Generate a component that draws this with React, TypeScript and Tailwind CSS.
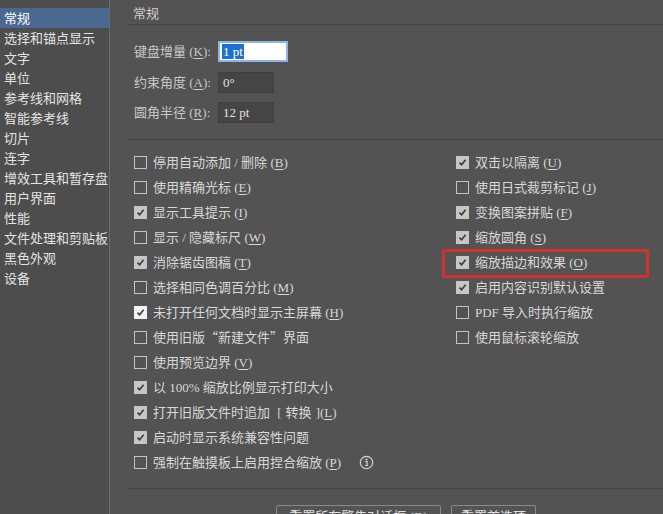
import { ReactNode } from "react";

const font = { fontFamily: '"Liberation Serif", "Noto Sans CJK SC", serif' };
const cjk = { fontFamily: '"Noto Sans CJK SC", sans-serif' };

const navItems = [
  "常规",
  "选择和锚点显示",
  "文字",
  "单位",
  "参考线和网格",
  "智能参考线",
  "切片",
  "连字",
  "增效工具和暂存盘",
  "用户界面",
  "性能",
  "文件处理和剪贴板",
  "黑色外观",
  "设备",
];

type Opt = { label: ReactNode; id: string; key?: string; tight?: boolean; checked: boolean; bright?: boolean; info?: boolean };

const leftOpts: Opt[] = [
  { id: "b", label: "停用自动添加 / 删除", key: "B", checked: false },
  { id: "e", label: "使用精确光标", key: "E", checked: false },
  { id: "i", label: "显示工具提示", key: "I", checked: true },
  { id: "w", label: "显示 / 隐藏标尺", key: "W", checked: false },
  { id: "t", label: "消除锯齿图稿", key: "T", checked: true },
  { id: "m", label: "选择相同色调百分比", key: "M", checked: false },
  { id: "h", label: "未打开任何文档时显示主屏幕", key: "H", checked: true, bright: true },
  {
    id: "new",
    label: (
      <>
        使用旧版<span style={cjk}>“</span>新建文件<span style={cjk}>”</span>界面
      </>
    ),
    checked: false,
  },
  { id: "v", label: "使用预览边界", key: "V", checked: false },
  { id: "print", label: "以 100% 缩放比例显示打印大小", checked: true },
  {
    id: "l",
    label: (
      <>
        打开旧版文件时追加 <span className="ml-[4px]">[</span>
        <span className="mx-[4px]">转换</span>]
      </>
    ),
    key: "L",
    checked: true,
    tight: true,
  },
  { id: "compat", label: "启动时显示系统兼容性问题", checked: true },
  { id: "p", label: "强制在触摸板上启用捏合缩放", key: "P", checked: false, info: true },
];

const rightOpts: Opt[] = [
  { id: "u", label: "双击以隔离", key: "U", checked: true },
  { id: "j", label: "使用日式裁剪标记", key: "J", checked: false },
  { id: "f", label: "变换图案拼贴", key: "F", checked: true },
  { id: "s", label: "缩放圆角", key: "S", checked: true },
  { id: "o", label: "缩放描边和效果", key: "O", checked: true },
  { id: "ca", label: "启用内容识别默认设置", checked: true },
  { id: "pdf", label: "PDF 导入时执行缩放", checked: false },
  { id: "wheel", label: "使用鼠标滚轮缩放", checked: false },
];

function Key({ k }: { k: string }) {
  return (
    <span>
      (<span className="underline underline-offset-2">{k}</span>)
    </span>
  );
}

function Box({ checked, bright }: { checked: boolean; bright?: boolean }) {
  if (!checked) {
    return <span className="block h-[13px] w-[13px] shrink-0 border border-[#c4c4c4]" />;
  }
  return (
    <span className={`flex h-[13px] w-[13px] shrink-0 items-center justify-center ${bright ? "bg-[#f2f2f2]" : "bg-[#c6c6c6]"}`}>
      <svg width="9" height="9" viewBox="0 0 9 9">
        <path d="M1.5 4.6 L3.6 6.8 L7.6 1.8" fill="none" stroke="#3c3c3c" strokeWidth="1.6" />
      </svg>
    </span>
  );
}

function Row({ o }: { o: Opt }) {
  return (
    <div className="flex h-[25px] items-center gap-[6px]">
      <Box checked={o.checked} bright={o.bright} />
      <span className="whitespace-nowrap">
        {o.label}
        {o.key && !o.tight && " "}
        {o.key && <Key k={o.key} />}
      </span>
      {o.info && (
        <svg className="ml-[12px]" width="15" height="15" viewBox="0 0 16 16">
          <circle cx="8" cy="8" r="6.6" fill="none" stroke="#d0d0d0" strokeWidth="1.3" />
          <circle cx="8" cy="4.8" r="1.1" fill="#d0d0d0" />
          <path d="M6.6 7 H8.6 V11 M6.4 11.2 H9.8" fill="none" stroke="#d0d0d0" strokeWidth="1.3" />
        </svg>
      )}
    </div>
  );
}

function Field({ label, k, children, className }: { label: string; k: string; children: ReactNode; className?: string }) {
  return (
    <div className={`flex h-[21px] items-center ${className ?? ""}`}>
      <span className="w-[84px] whitespace-nowrap text-[#c9c9c9]">
        {label} <Key k={k} />:
      </span>
      {children}
    </div>
  );
}

export default function App() {
  return (
    <div className="flex h-[514px] w-[663px] overflow-hidden bg-[#535353] text-[13px] text-[#d8d8d8]" style={font}>
      <aside className="w-[110px] shrink-0 border-r border-[#6a6a6a] bg-[#4d4d4d] pt-[8px]">
        {navItems.map((n, i) => (
          <div
            key={n}
            className={`flex h-[20px] items-center whitespace-nowrap pl-[4px] leading-none ${
              i === 0 ? "bg-[#4b6990] text-white" : "text-[#e4e4e4]"
            }`}
          >
            {n}
          </div>
        ))}
      </aside>

      <main className="flex min-w-0 flex-1 flex-col pl-[18px]">
        <div className="h-[25px] shrink-0 border-b border-[#444] pl-[5px] pt-[6px] leading-[16px] text-[#cfcfcf]">常规</div>

        <div className="flex shrink-0 flex-col border-b border-[#444] pb-[16px] pl-[6px] pt-[16px]">
          <Field label="键盘增量" k="K">
            <span className="flex h-[21px] w-[70px] items-center border-2 border-[#8fb5e8] bg-white px-[2px]">
              <span className="bg-[#1e6fd0] px-[1px] leading-[15px] text-white">1 pt</span>
            </span>
          </Field>
          <Field label="约束角度" k="A" className="mt-[10px]">
            <span className="flex h-[21px] w-[56px] items-center border border-[#3e3e3e] bg-[#454545] px-[4px] text-[#e2e2e2]">0°</span>
          </Field>
          <Field label="圆角半径" k="R" className="mt-[9px]">
            <span className="flex h-[21px] w-[56px] items-center border border-[#3e3e3e] bg-[#454545] px-[4px] text-[#e2e2e2]">12 pt</span>
          </Field>
        </div>

        <div className="flex h-[349px] shrink-0 border-b border-[#444] pl-[6px] pt-[10px]">
          <div className="w-[322px] shrink-0">
            {leftOpts.map((o) => (
              <Row key={o.id} o={o} />
            ))}
          </div>
          <div>
            {rightOpts.map((o, i) =>
              i === 4 ? (
                <div key={o.id} className="relative">
                  <div className="pointer-events-none absolute left-[-14px] top-[-1px] h-[29px] w-[207px] rounded-[2px] border-[3px] border-[#d1322b]" />
                  <Row o={o} />
                </div>
              ) : (
                <Row key={o.id} o={o} />
              )
            )}
          </div>
        </div>

        <div className="flex shrink-0 gap-[10px] pl-[148px] pt-[16px]">
          <button className="h-[24px] w-[165px] rounded-[2px] border border-[#8a8a8a] bg-[#535353] text-[#e0e0e0]">
            重置所有警告对话框 <Key k="D" />
          </button>
          <button className="h-[24px] w-[85px] rounded-[2px] border border-[#8a8a8a] bg-[#535353] text-[#e0e0e0]">
            重置首选项
          </button>
        </div>
      </main>
    </div>
  );
}
